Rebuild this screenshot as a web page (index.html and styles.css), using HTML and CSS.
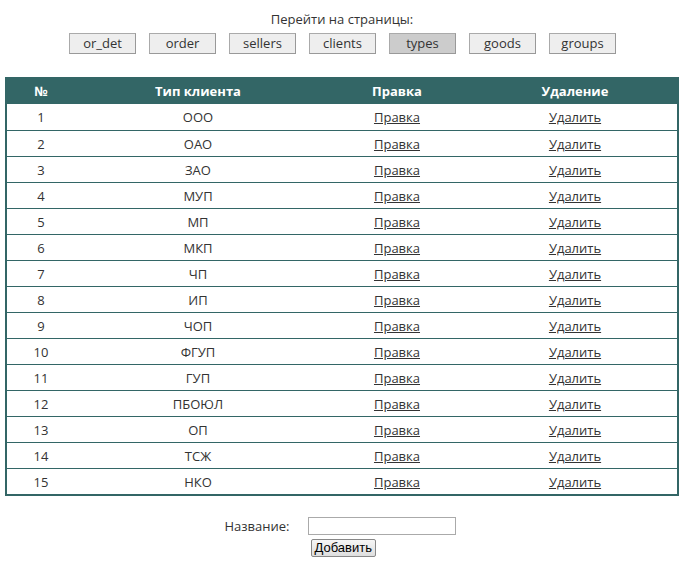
FILE: index.html
```html
<!DOCTYPE html>
<html lang="ru">
<head>
<meta charset="utf-8">
<title>types</title>
<link rel="stylesheet" href="styles.css">
</head>
<body>
<div class="nav">
  <div class="nav-title">Перейти на страницы:</div>
  <div class="nav-buttons">
    <a class="nav-btn" href="#">or_det</a>
    <a class="nav-btn" href="#">order</a>
    <a class="nav-btn" href="#">sellers</a>
    <a class="nav-btn" href="#">clients</a>
    <a class="nav-btn active" href="#">types</a>
    <a class="nav-btn" href="#">goods</a>
    <a class="nav-btn" href="#">groups</a>
  </div>
</div>
<table class="data">
  <thead>
    <tr><th class="c1">№</th><th class="c2">Тип клиента</th><th class="c3">Правка</th><th class="c4">Удаление</th></tr>
  </thead>
  <tbody>
    <tr><td>1</td><td>ООО</td><td><a href="#">Правка</a></td><td><a href="#">Удалить</a></td></tr>
    <tr><td>2</td><td>ОАО</td><td><a href="#">Правка</a></td><td><a href="#">Удалить</a></td></tr>
    <tr><td>3</td><td>ЗАО</td><td><a href="#">Правка</a></td><td><a href="#">Удалить</a></td></tr>
    <tr><td>4</td><td>МУП</td><td><a href="#">Правка</a></td><td><a href="#">Удалить</a></td></tr>
    <tr><td>5</td><td>МП</td><td><a href="#">Правка</a></td><td><a href="#">Удалить</a></td></tr>
    <tr><td>6</td><td>МКП</td><td><a href="#">Правка</a></td><td><a href="#">Удалить</a></td></tr>
    <tr><td>7</td><td>ЧП</td><td><a href="#">Правка</a></td><td><a href="#">Удалить</a></td></tr>
    <tr><td>8</td><td>ИП</td><td><a href="#">Правка</a></td><td><a href="#">Удалить</a></td></tr>
    <tr><td>9</td><td>ЧОП</td><td><a href="#">Правка</a></td><td><a href="#">Удалить</a></td></tr>
    <tr><td>10</td><td>ФГУП</td><td><a href="#">Правка</a></td><td><a href="#">Удалить</a></td></tr>
    <tr><td>11</td><td>ГУП</td><td><a href="#">Правка</a></td><td><a href="#">Удалить</a></td></tr>
    <tr><td>12</td><td>ПБОЮЛ</td><td><a href="#">Правка</a></td><td><a href="#">Удалить</a></td></tr>
    <tr><td>13</td><td>ОП</td><td><a href="#">Правка</a></td><td><a href="#">Удалить</a></td></tr>
    <tr><td>14</td><td>ТСЖ</td><td><a href="#">Правка</a></td><td><a href="#">Удалить</a></td></tr>
    <tr><td>15</td><td>НКО</td><td><a href="#">Правка</a></td><td><a href="#">Удалить</a></td></tr>
  </tbody>
</table>
<form class="add-form">
  <label class="add-label" for="name">Название:</label>
  <input class="add-input" id="name" type="text">
  <span></span>
  <button class="add-btn" type="button">Добавить</button>
</form>
</body>
</html>
```

FILE: styles.css
```css
html, body {
  margin: 0;
  padding: 0;
  background: #fff;
}
body {
  font-family: "Open Sans", "Noto Sans", sans-serif;
  font-size: 13px;
  color: #333;
  padding: 0 8px 0 5px;
}
.nav {
  display: flex;
  flex-direction: column;
  align-items: center;
  padding-top: 10px;
}
.nav-title {
  line-height: 18px;
  height: 18px;
}
.nav-buttons {
  display: flex;
  gap: 13px;
  margin-top: 5px;
  margin-left: 1px;
}
.nav-btn {
  display: block;
  box-sizing: border-box;
  width: 67px;
  height: 21px;
  line-height: 19px;
  text-align: center;
  background: #eee;
  border: 1px solid #aaa;
  border-right-color: #999;
  border-bottom-color: #999;
  color: #333;
  text-decoration: none;
}
.nav-btn.active {
  background: #ccc;
}
.data {
  margin-top: 23px;
  width: 674px;
  border-collapse: collapse;
  border: 2px solid #336666;
  border-top: 0;
}
.data th {
  background: #336666;
  color: #fff;
  font-weight: bold;
  height: 27px;
  padding: 0;
  text-align: center;
}
.data td {
  text-align: center;
  height: 25px;
  padding: 0;
  border-top: 1px solid #336666;
}
.data tbody tr:first-child td {
  border-top: 0;
  height: 26px;
}
.c1 { width: 68px; }
.c2 { width: 246px; }
.c3 { width: 152px; }
.c4 { width: 204px; }
.data a {
  color: #333;
  text-decoration: underline;
}
.add-form {
  display: grid;
  grid-template-columns: auto auto;
  justify-content: center;
  column-gap: 18px;
  row-gap: 4px;
  margin-top: 21px;
  margin-right: 4px;
}
.add-label {
  align-self: center;
  line-height: 18px;
}
.add-input {
  box-sizing: border-box;
  width: 148px;
  height: 18px;
  margin: 0;
  border: 1px solid #aaa;
  padding: 0 2px;
}
.add-btn {
  justify-self: start;
  margin-left: 3px;
  height: 18px;
  padding: 0 3px;
  font-family: "Liberation Sans", Arial, sans-serif;
  font-size: 13px;
  color: #000;
  background: linear-gradient(#f6f6f6, #dedede);
  border: 1px solid #888;
  border-radius: 2px;
  line-height: 14px;
}
```
